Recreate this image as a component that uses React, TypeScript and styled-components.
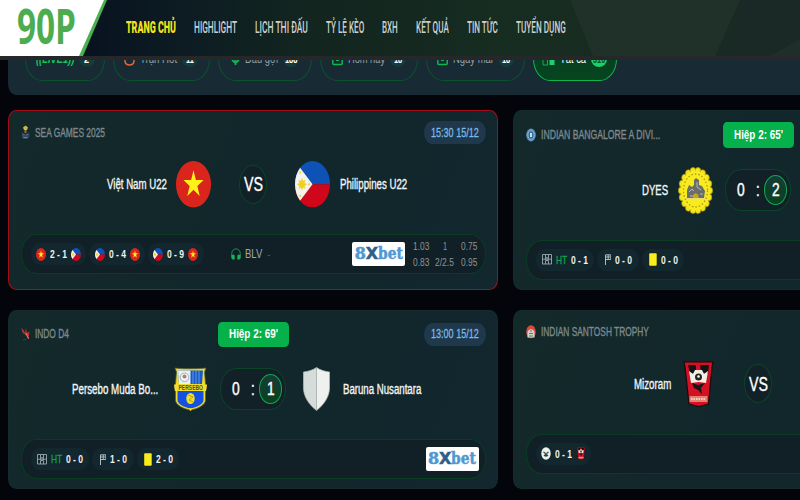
import React, { useLayoutEffect, useRef, useState } from "react";
import styled, { createGlobalStyle, css } from "styled-components";

const Global = createGlobalStyle`
  * { box-sizing: border-box; }
  body { margin: 0; background: #03050b; font-family: "Liberation Sans", Arial, sans-serif; }
`;

/* ---------- condensed text ---------- */

const FitBox = styled.span<{ $w: number }>`
  display: block;
  flex: none;
  width: ${(p) => p.$w}px;
  white-space: nowrap;
`;
const FitInner = styled.span`
  display: inline-block;
  transform-origin: 0 50%;
`;

/** Squeezes a line of text horizontally so that it is exactly `w` wide. */
function Fit({ w, children }: { w: number; children: string }) {
  const ref = useRef<HTMLSpanElement>(null);
  const [scale, setScale] = useState(0.75);
  useLayoutEffect(() => {
    if (ref.current) setScale(w / ref.current.offsetWidth);
  }, [w, children]);
  return (
    <FitBox $w={w}>
      <FitInner ref={ref} style={{ transform: `scaleX(${scale})` }}>{children}</FitInner>
    </FitBox>
  );
}

/* ---------- page and header ---------- */

const Page = styled.div`
  width: 800px;
  height: 500px;
  overflow: hidden;
  background: #03050b;
`;
const Header = styled.header`
  position: relative;
  z-index: 2;
  display: flex;
  height: 60px;
  border-bottom: 4px solid #252729;
  background: linear-gradient(90deg, #08131f 90px, #0d1c23 190px, #12251f 300px, #142820 420px, #172d21 500px, #172b22 600px, #1b2826 800px);
`;
const HeaderShade = styled.svg`
  position: absolute;
  inset: 0;
  width: 800px;
  height: 56px;
`;
const Brand = styled.div`
  position: relative;
  width: 108px;
  height: 56px;
  flex: none;
  background: #4caf50;
  clip-path: polygon(0 0, 107px 0, 83px 100%, 0 100%);
`;
const BrandFace = styled.div`
  height: 56px;
  padding: 0 0 0 17px;
  background: #fff;
  clip-path: polygon(0 0, 104px 0, 79px 100%, 0 100%);
  color: #4dac50;
  font: 700 48px/51px "Open Sans", sans-serif;
`;
const Nav = styled.nav`
  position: relative;
  display: flex;
  align-items: center;
  gap: 18px;
  height: 55px;
  margin-left: 18px;
`;
const NavItem = styled.a<{ $active?: boolean }>`
  color: ${(p) => (p.$active ? "#f7e31c" : "#cdd1ce")};
  font-family: Roboto, sans-serif;
  font-size: 16px;
  line-height: 20px;
  font-weight: ${(p) => (p.$active ? 900 : 500)};
`;

/* ---------- filter strip ---------- */

const Filters = styled.section`
  display: flex;
  align-items: flex-end;
  gap: 8px;
  height: 65px;
  margin: -30px 0 15px 8px;
  padding: 0 0 14px 17px;
  border-radius: 0 0 0 8px / 0 0 0 11px;
  background: #182a33;
`;
const FilterPill = styled.div<{ $w: number; $active?: boolean }>`
  display: flex;
  align-items: center;
  justify-content: center;
  gap: 5px;
  flex: none;
  width: ${(p) => p.$w}px;
  height: 44px;
  border: 1px solid ${(p) => (p.$active ? "#0fb54c" : "#0b5130")};
  border-radius: 17px / 22px;
  background: ${(p) => (p.$active ? "linear-gradient(#073b22, #06451f)" : "transparent")};
  color: ${(p) => (p.$active ? "#fff" : "#96a1a5")};
  font-size: 13px;
  line-height: 16px;
  font-weight: 500;
`;
const Live = styled.span`
  color: #12c659;
  font-weight: 700;
  font-style: italic;
`;
const Count = styled.span<{ $active?: boolean }>`
  display: flex;
  justify-content: center;
  width: 16px;
  height: 16px;
  border-radius: 8px;
  background: ${(p) => (p.$active ? "#1fce6c" : "#153c38")};
  color: ${(p) => (p.$active ? "#075024" : "#fff")};
  font-size: 11px;
  font-weight: 700;
`;

/* ---------- match cards ---------- */

const Board = styled.main`
  display: grid;
  grid-template-columns: 490px 490px;
  grid-template-rows: 180px 179.5px;
  gap: 19.5px 15px;
  width: 1010px;
  padding-left: 8px;
`;
const Card = styled.article<{ $live?: boolean; $hot?: boolean }>`
  display: flex;
  flex-direction: column;
  padding: ${(p) => (p.$live ? "11px" : "10px")} 11.5px 0;
  border: 1px solid ${(p) => (p.$hot ? "#a50d16" : "#152c2e")};
  border-radius: 8px / 10px;
  background: linear-gradient(110deg, #13292a 0%, #12272b 45%, #12272e 100%);
`;
const CardHead = styled.div<{ $live?: boolean }>`
  display: grid;
  grid-template-columns: 1fr auto 1fr;
  align-items: center;
  height: ${(p) => (p.$live ? 25.5 : 23)}px;
`;
const League = styled.div`
  display: flex;
  align-items: center;
  gap: 5px;
  color: #7d898c;
  font-size: 12px;
  line-height: 16px;
  -webkit-text-stroke: 0.35px currentColor;
  svg { flex: none; }
`;
const Badge = styled.div`
  display: grid;
  place-items: center;
  width: 71px;
  height: 25.5px;
  border-radius: 4px / 5px;
  background: #06b04b;
  color: #fff;
  font-size: 13.5px;
  line-height: 20px;
  font-weight: 700;
`;
const Time = styled.time`
  display: grid;
  place-items: center;
  justify-self: end;
  width: 62px;
  height: 23px;
  border-radius: 9px / 11.5px;
  background: #1f384b;
  color: #7db9e8;
  font-size: 13px;
  line-height: 18px;
  -webkit-text-stroke: 0.3px currentColor;
`;
const Teams = styled.div<{ $live?: boolean }>`
  display: grid;
  grid-template-columns: 1fr ${(p) => (p.$live ? 91 : 84)}px 1fr;
  align-items: center;
  height: 46.5px;
  margin-top: ${(p) => (p.$live ? 19 : 17)}px;
`;
const Team = styled.div<{ $home?: boolean; $gap?: number }>`
  display: flex;
  align-items: center;
  justify-content: ${(p) => (p.$home ? "flex-end" : "flex-start")};
  gap: ${(p) => p.$gap ?? 9.5}px;
  color: #f2f5f5;
  font-size: 14px;
  line-height: 20px;
  -webkit-text-stroke: 0.35px currentColor;
  svg { flex: none; -webkit-text-stroke: 0; }
`;
const ringed = css`
  justify-self: center;
  border: 1px solid #0a4527;
  background: #112127;
  color: #fff;
`;
const Versus = styled.div`
  ${ringed}
  display: grid;
  place-items: center;
  width: 28px;
  height: 39px;
  border-radius: 50%;
  font-size: 19.5px;
  line-height: 24px;
  -webkit-text-stroke: 0.35px currentColor;
`;
const ScorePill = styled.div`
  ${ringed}
  display: grid;
  grid-template-columns: 23.5px 11.5px 23.5px;
  justify-content: center;
  align-items: center;
  justify-items: center;
  width: 66px;
  height: 42px;
  border-radius: 16px / 21px;
  font-size: 19px;
  line-height: 24px;
  -webkit-text-stroke: 0.45px currentColor;
`;
const Leading = styled.span`
  display: grid;
  place-items: center;
  width: 23.5px;
  height: 30px;
  border: 1px solid #12a850;
  border-radius: 50%;
  background: linear-gradient(#163c38, #08421f);
`;
const Bar = styled.div`
  display: flex;
  align-items: center;
  gap: 3.3px;
  height: 40px;
  margin-top: 26.7px;
  padding: 0 6px 0 9px;
  border: 1px solid #083d22;
  border-radius: 15px / 20px;
  background: #112026;
`;
const Chip = styled.div<{ $w: number }>`
  display: flex;
  align-items: center;
  justify-content: center;
  gap: 4px;
  flex: none;
  width: ${(p) => p.$w}px;
  height: 22px;
  border-radius: 9px / 11px;
  background: #13272f;
  color: #f1f3f3;
  font-size: 11.5px;
  line-height: 16px;
  font-weight: 700;
  svg { flex: none; }
`;
const Half = styled.span`
  color: #0fa44e;
  font-weight: 400;
  -webkit-text-stroke: 0.3px currentColor;
`;
const Caster = styled.div`
  display: flex;
  align-items: center;
  gap: 4px;
  margin-left: 24.5px;
  color: #a0a7a8;
  font-size: 13px;
  line-height: 18px;
`;
const CasterDash = styled.span`
  color: #4c585c;
  font-size: 11px;
`;
const Sponsor = styled.div<{ $withOdds?: boolean }>`
  display: flex;
  align-items: center;
  justify-content: center;
  flex: none;
  width: 53px;
  height: 23.5px;
  margin-left: auto;
  margin-right: ${(p) => (p.$withOdds ? -2 : 0)}px;
  border-radius: 2px;
  background: #fff;
  color: #4f98d3;
  font: 700 16px/20px "DejaVu Serif", serif;
  -webkit-text-stroke: 0.5px currentColor;
`;
const SponsorX = styled.span`
  color: #2f5f88;
  font-family: "DejaVu Sans", sans-serif;
`;
const Odds = styled.div`
  display: grid;
  grid-template-columns: repeat(3, 24px);
  justify-items: center;
  row-gap: 2px;
  margin: 0 -2px 0 2px;
  color: #8b9496;
  font-size: 11px;
  line-height: 14px;
`;

/* ---------- drawings ---------- */

type Size = { w?: number; h?: number };

const Vietnam = ({ w = 35, h = 46.5 }: Size) => (
  <svg width={w} height={h} viewBox="0 0 40 40" preserveAspectRatio="none">
    <circle cx="20" cy="20" r="20" fill="#da251d" />
    <path d="M20 8l2.700 8.400h8.800l-7.100 5.100 2.700 8.500-7.100-5.200-7.100 5.200 2.700-8.500-7.100-5.100h8.800z" fill="#fff21a" />
  </svg>
);
const Philippines = ({ w = 35, h = 46.5 }: Size) => (
  <svg width={w} height={h} viewBox="0 0 40 40" preserveAspectRatio="none">
    <clipPath id="round"><circle cx="20" cy="20" r="20" /></clipPath>
    <g clipPath="url(#round)">
      <path d="M0 0h40v20H0z" fill="#0f52b5" />
      <path d="M0 20h40v20H0z" fill="#d0061b" />
      <path d="M0 0L20 20 0 40z" fill="#f2f2ee" />
      <path d="M8 14.500l1.200 2.600 2.700-1-1 2.700 2.600 1.200-2.600 1.200 1 2.700-2.700-1L8 25.500l-1.200-2.600-2.700 1 1-2.700L2.500 20l2.600-1.200-1-2.700 2.700 1z" fill="#f2cf1d" />
      <circle cx="6" cy="10" r="1" fill="#f2cf1d" />
      <circle cx="6" cy="30" r="1" fill="#f2cf1d" />
      <circle cx="16" cy="20" r="1" fill="#f2cf1d" />
    </g>
  </svg>
);
const Dyes = () => (
  <svg width="35" height="47" viewBox="0 0 35 47">
    <g fill="#f5e51b" stroke="#ab9819" strokeWidth=".7">
      {Array.from({ length: 18 }, (_, i) => {
        const a = (i * Math.PI) / 9;
        return <ellipse key={i} cx={17.5 + 14.2 * Math.cos(a)} cy={23.5 + 19.8 * Math.sin(a)} rx="2.9" ry="3.5" />;
      })}
    </g>
    <ellipse cx="17.5" cy="23.5" rx="14.5" ry="20" fill="#faec1c" />
    <ellipse cx="17.5" cy="23.5" rx="12" ry="16.5" fill="none" stroke="#a89a22" strokeWidth="1.3" strokeDasharray="1.5 2" />
    <path d="M9 31v-8l2-5 3 2 2-2v-5l2-2 3 2v5l3 1 3 5-1 7z" fill="#6b6d69" />
    <path d="M11 25l3-3 2 2M19 15v5l4 3M12 29h3M22 27h3" stroke="#b5b8b5" fill="none" />
    <path d="M15 31v-3l2.500-2 3 2v3z" fill="#c9a51d" />
    <path d="M8 32h19" stroke="#d8d7b0" strokeWidth="1.2" />
  </svg>
);
const Persebo = () => (
  <svg width="35" height="46" viewBox="0 0 35 46">
    <path d="M2 2c5 1 26 1 31 0l-1.500 4 1 12 1 3-1 5v8c0 5-8 9-15 10C10.500 43 2.500 39 2.500 34v-8l-1-5 1-3 1-12z" fill="#f2dd25" stroke="#5d6236" strokeWidth=".8" />
    <path d="M5 4.500h25l-1 13.500H6z" fill="#1857cf" />
    <path d="M5 4.500h12.500V18H6z" fill="#e8f0f2" />
    <circle cx="11.5" cy="11.3" r="4.3" fill="#f5f3ed" stroke="#71a7cd" strokeWidth=".8" />
    <circle cx="11.5" cy="10.5" r="2" fill="#b97c68" />
    <path d="M20 5v13M23 5v13M26 5v13" stroke="#79b0dd" strokeWidth=".8" />
    <path d="M4.500 25h26v9c0 4-7 7.500-13 8.500-6-1-13-4.500-13-8.500z" fill="#1450e2" />
    <path d="M1 18.500h33l-1 6.500H2z" fill="#f1df2d" />
    <text x="5.500" y="24.300" fontFamily="Liberation Sans" fontWeight="700" fontSize="7" fill="#54501d" textLength="24.500" lengthAdjust="spacingAndGlyphs">PERSEBO</text>
    <ellipse cx="17.5" cy="32.5" rx="4.2" ry="5.5" fill="#f2df27" />
    <path d="M15 29l5 2-4 3 4 2" stroke="#a29222" fill="none" strokeWidth=".8" />
    <path d="M15.500 42.500h4l-2 2.500z" fill="#f6e51c" />
  </svg>
);
const Shield = () => (
  <svg width="35" height="46" viewBox="0 0 35 46">
    <path d="M17.500 1.500C14 4 9 5.500 4.500 6v16c0 9 6 17 13 22.500z" fill="#d5dcda" />
    <path d="M17.500 1.500C21 4 26 5.500 30.500 6v16c0 9-6 17-13 22.500z" fill="#eef1ed" />
    <path d="M17.500 1.500C14 4 9 5.500 4.500 6v16c0 9 6 17 13 22.500 7-5.500 13-13.500 13-22.500V6C26 5.500 21 4 17.500 1.500z" fill="none" stroke="#b9bfb5" strokeWidth=".7" />
  </svg>
);
const Mizoram = ({ w = 35, h = 46.5 }: Size) => (
  <svg width={w} height={h} viewBox="0 0 35 46.5" preserveAspectRatio="none">
    <path d="M3 1h29l-1 5-3.500 37-10 2.500L8 43 4 6z" fill="#d51022" stroke="#1b090d" strokeWidth="1.2" />
    <path d="M7 4h8v7l-6 2zM19 4h9l-1 9-7-2z" fill="#101417" />
    <path d="M8 10l4 3 2-4h7l2 4 4-3-2 12-7-1-8 1z" fill="#f1efe6" />
    <circle cx="17.5" cy="16" r="3.5" fill="#252523" />
    <circle cx="17.5" cy="15.5" r="1.3" fill="#fff" />
    <path d="M11 22l6 2 7-2-4 5 1 6-4-4-4-2z" fill="#181517" />
    <rect x="8.5" y="35" width="18" height="6" fill="#e77e72" />
    <path d="M10 38h15" stroke="#f3d4c3" strokeWidth="2" strokeDasharray="1.5 1" />
  </svg>
);
const Panda = () => (
  <svg width="10" height="13" viewBox="0 0 10 13">
    <ellipse cx="5" cy="6.5" rx="4.7" ry="6.2" fill="#edf1ed" />
    <path d="M2.500 5l2 1.500M7.500 5l-2 1.500M3 9l2-2 2 2M5 7v3" stroke="#35423e" strokeWidth="1.2" fill="none" />
  </svg>
);
const SeaGames = () => (
  <svg width="9" height="15" viewBox="0 0 9 15">
    <path d="M2 2.500L4.500.5 7 2.500 6 5H3z" fill="#d7b43d" />
    <path d="M3.500 5h2v3h-2z" fill="#77804d" />
    <path d="M.8 7l2 2h3.500l2-2v5l-2 2H2.500l-1.700-2z" fill="#284c60" />
    <path d="M2 9.500h1.500M5.500 9.500H7" stroke="#bd5264" />
    <path d="M2.500 12.500h4" stroke="#4d9297" />
  </svg>
);
const Bangalore = () => (
  <svg width="10" height="14" viewBox="0 0 10 14">
    <ellipse cx="5" cy="7" rx="4.8" ry="6.5" fill="#5d91ba" />
    <ellipse cx="5" cy="7" rx="3" ry="4.2" fill="#2f6c9e" stroke="#a7c8dd" strokeWidth=".7" />
    <path d="M4 5h2v4H4z" fill="#c5e1ef" />
  </svg>
);
const IndoD4 = () => (
  <svg width="9" height="15" viewBox="0 0 9 15">
    <path d="M.3.800L2.500 3 4 6 5 1l.8 5L8.500 4.500 7.500 12 5 8.500 1.500 5.500z" fill="#b93236" />
    <path d="M5 6l2.500 6" stroke="#e97b62" />
    <path d="M2 13l3-.5" stroke="#35464b" />
  </svg>
);
const Santosh = () => (
  <svg width="10" height="14" viewBox="0 0 10 14">
    <ellipse cx="5" cy="6.8" rx="4.8" ry="6.5" fill="#de4a39" />
    <path d="M1.500 8C1.500 3 8.500 3 8.500 8v4.500h-7z" fill="#d2d3cc" />
    <path d="M3 8.500h4M4 6h2M3 11h4" stroke="#68736f" />
  </svg>
);
const Goal = () => (
  <svg width="10" height="11" viewBox="0 0 10 11" fill="none" stroke="#9caaae">
    <path d="M.5.500h9v9.500h-9zM.5 5.200h9M3.500 1v3M6.500 1v3M3.500 6.500V10M6.500 6.500V10" strokeWidth=".9" />
    <circle cx="5" cy="5.2" r="1.5" />
  </svg>
);
const Corner = () => (
  <svg width="7.5" height="11" viewBox="0 0 7.5 11" fill="none" stroke="#c2cbcd">
    <path d="M1.500 11V.8H6.800v4.700H1.500M4.200 1v4M1.500 3h5" strokeWidth=".9" />
  </svg>
);
const YellowCard = () => (
  <svg width="8" height="13" viewBox="0 0 8 13"><rect x=".2" y=".3" width="7.5" height="12.4" rx="1" fill="#fbed1c" /></svg>
);
const Headphones = () => (
  <svg width="10" height="12" viewBox="0 0 10 12">
    <path d="M.8 8V5.500C.8-.7 9.200-.7 9.200 5.500V8" fill="none" stroke="#10984b" />
    <path d="M.3 7.500l2.200-1 1.200 1v4H1.500L.3 10zM9.700 7.500l-2.200-1-1.200 1v4h2.200L9.700 10z" fill="#16b559" />
  </svg>
);
const Flame = () => (
  <svg width="11" height="14" viewBox="0 0 11 14"><path d="M3 4C0 7 0 13 5.500 13S11 7 8 4" fill="none" stroke="#e5673a" strokeWidth="1.5" /></svg>
);
const Ball = () => (
  <svg width="9" height="14" viewBox="0 0 9 14"><path d="M4.500 1v12M1 8l3.500 3L8 8" fill="none" stroke="#10b552" strokeWidth="1.8" /></svg>
);
const Calendar = () => (
  <svg width="11" height="14" viewBox="0 0 11 14"><rect x=".8" y="2" width="9.4" height="10.5" rx="1" fill="none" stroke="#10b552" strokeWidth="1.5" /><path d="M4 8.500h3" stroke="#10b552" /></svg>
);
const Tiles = () => (
  <svg width="13" height="14" viewBox="0 0 13 14"><path d="M1 4h4.500v9H1z" fill="none" stroke="#19a954" /><path d="M7.500 7.500h5v5.500h-5z" fill="#1fce6c" /></svg>
);

/* ---------- assembled parts ---------- */

const navItems: [string, number][] = [
  ["TRANG CHỦ", 50], ["HIGHLIGHT", 43], ["LỊCH THI ĐẤU", 53], ["TỶ LỆ KÈO", 38],
  ["BXH", 16], ["KẾT QUẢ", 33], ["TIN TỨC", 31], ["TUYỂN DỤNG", 50],
];

const EightXBet = ({ withOdds }: { withOdds?: boolean }) => (
  <Sponsor $withOdds={withOdds}>
    <Fit w={11}>8</Fit>
    <SponsorX><Fit w={12}>X</Fit></SponsorX>
    <Fit w={25}>bet</Fit>
  </Sponsor>
);

function Score({ home, away }: { home: string; away: string }) {
  return (
    <ScorePill>
      <Fit w={8}>{home}</Fit>
      <Fit w={3.5}>:</Fit>
      <Leading><Fit w={8}>{away}</Fit></Leading>
    </ScorePill>
  );
}

function LiveChips({ half, corners, cards }: { half: string; corners: string; cards: string }) {
  return (
    <>
      <Chip $w={58}><Goal /><Half><Fit w={11}>HT</Fit></Half><Fit w={17}>{half}</Fit></Chip>
      <Chip $w={42}><Corner /><Fit w={17}>{corners}</Fit></Chip>
      <Chip $w={42}><YellowCard /><Fit w={17}>{cards}</Fit></Chip>
    </>
  );
}

export default function App() {
  return (
    <Page>
      <Global />
      <Header>
        <HeaderShade viewBox="0 0 800 56">
          <path d="M570 0h170l-25 56H593z" fill="#20312a" />
          <path d="M770 56l30-17v17z" fill="#202e2b" />
        </HeaderShade>
        <Brand><BrandFace><Fit w={59}>90P</Fit></BrandFace></Brand>
        <Nav>
          {navItems.map(([label, w], i) => (
            <NavItem key={label} $active={i === 0}><Fit w={w}>{label}</Fit></NavItem>
          ))}
        </Nav>
      </Header>

      <Filters>
        <FilterPill $w={80}><Live><Fit w={38}>((LIVE1))</Fit></Live><Count><Fit w={5}>2</Fit></Count></FilterPill>
        <FilterPill $w={96.5}><Flame /><Fit w={37}>Trận Hot</Fit><Count><Fit w={8}>11</Fit></Count></FilterPill>
        <FilterPill $w={94}><Ball /><Fit w={33}>Đấu gợi</Fit><Count><Fit w={12}>188</Fit></Count></FilterPill>
        <FilterPill $w={98}><Calendar /><Fit w={37}>Hôm nay</Fit><Count><Fit w={8}>18</Fit></Count></FilterPill>
        <FilterPill $w={99}><Calendar /><Fit w={40}>Ngày mai</Fit><Count><Fit w={8}>18</Fit></Count></FilterPill>
        <FilterPill $w={84} $active><Tiles /><Fit w={26}>Tất cả</Fit><Count $active><Fit w={12}>310</Fit></Count></FilterPill>
      </Filters>

      <Board>
        <Card $hot>
          <CardHead>
            <League><SeaGames /><Fit w={70}>SEA GAMES 2025</Fit></League>
            <span />
            <Time><Fit w={48}>15:30 15/12</Fit></Time>
          </CardHead>
          <Teams>
            <Team $home><Fit w={60}>Việt Nam U22</Fit><Vietnam /></Team>
            <Versus><Fit w={19}>VS</Fit></Versus>
            <Team><Philippines /><Fit w={67}>Philippines U22</Fit></Team>
          </Teams>
          <Bar>
            <Chip $w={55.5}><Vietnam w={10} h={13} /><Fit w={17}>2 - 1</Fit><Philippines w={10} h={13} /></Chip>
            <Chip $w={55.5}><Philippines w={10} h={13} /><Fit w={17}>0 - 4</Fit><Vietnam w={10} h={13} /></Chip>
            <Chip $w={55.5}><Philippines w={10} h={13} /><Fit w={17}>0 - 9</Fit><Vietnam w={10} h={13} /></Chip>
            <Caster><Headphones /><Fit w={17.5}>BLV</Fit><CasterDash>-</CasterDash></Caster>
            <EightXBet withOdds />
            <Odds>
              <Fit w={16}>1.03</Fit><Fit w={4}>1</Fit><Fit w={16}>0.75</Fit>
              <Fit w={16}>0.83</Fit><Fit w={18.5}>2/2.5</Fit><Fit w={16}>0.95</Fit>
            </Odds>
          </Bar>
        </Card>

        <Card $live>
          <CardHead $live>
            <League><Bangalore /><Fit w={119}>INDIAN BANGALORE A DIVI...</Fit></League>
            <Badge><Fit w={49}>Hiệp 2: 65'</Fit></Badge>
          </CardHead>
          <Teams $live>
            <Team $home><Fit w={26}>DYES</Fit><Dyes /></Team>
            <Score home="0" away="2" />
          </Teams>
          <Bar><LiveChips half="0 - 1" corners="0 - 0" cards="0 - 0" /></Bar>
        </Card>

        <Card $live>
          <CardHead $live>
            <League><IndoD4 /><Fit w={34}>INDO D4</Fit></League>
            <Badge><Fit w={49}>Hiệp 2: 69'</Fit></Badge>
            <Time><Fit w={48}>13:00 15/12</Fit></Time>
          </CardHead>
          <Teams $live>
            <Team $home $gap={14}><Fit w={86.5}>Persebo Muda Bo...</Fit><Persebo /></Team>
            <Score home="0" away="1" />
            <Team><Shield /><Fit w={78.5}>Baruna Nusantara</Fit></Team>
          </Teams>
          <Bar><LiveChips half="0 - 0" corners="1 - 0" cards="2 - 0" /><EightXBet /></Bar>
        </Card>

        <Card>
          <CardHead>
            <League><Santosh /><Fit w={108}>INDIAN SANTOSH TROPHY</Fit></League>
          </CardHead>
          <Teams>
            <Team $home><Fit w={37.5}>Mizoram</Fit><Mizoram /></Team>
            <Versus><Fit w={19}>VS</Fit></Versus>
          </Teams>
          <Bar><Chip $w={55.5}><Panda /><Fit w={17}>0 - 1</Fit><Mizoram w={10} h={13} /></Chip></Bar>
        </Card>
      </Board>
    </Page>
  );
}
